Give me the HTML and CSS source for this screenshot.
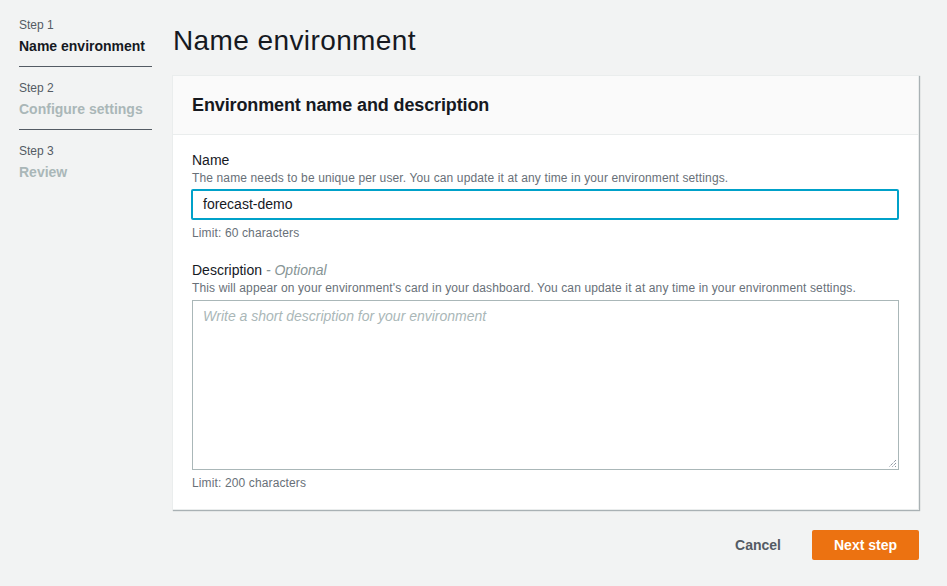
FILE: index.html
```html
<!DOCTYPE html>
<html>
<head>
<meta charset="utf-8">
<link rel="stylesheet" href="styles.css">
</head>
<body>
<div class="page">
  <nav class="steps">
    <div class="step">
      <div class="step-num">Step 1</div>
      <div class="step-name active">Name environment</div>
    </div>
    <div class="step">
      <div class="step-num">Step 2</div>
      <div class="step-name">Configure settings</div>
    </div>
    <div class="step last">
      <div class="step-num">Step 3</div>
      <div class="step-name">Review</div>
    </div>
  </nav>
  <main class="main">
    <h1 class="title">Name environment</h1>
    <section class="card">
      <header class="card-head">
        <h2>Environment name and description</h2>
      </header>
      <div class="card-body">
        <div class="field">
          <div class="label">Name</div>
          <div class="desc">The name needs to be unique per user. You can update it at any time in your environment settings.</div>
          <div class="input">forecast-demo</div>
          <div class="constraint">Limit: 60 characters</div>
        </div>
        <div class="field second">
          <div class="label">Description <span class="optional">- Optional</span></div>
          <div class="desc">This will appear on your environment's card in your dashboard. You can update it at any time in your environment settings.</div>
          <div class="textarea">
            <span class="placeholder">Write a short description for your environment</span>
            <svg class="grip" width="9" height="9" viewBox="0 0 9 9"><path d="M8 1 L1 8 M8 4 L4 8 M8 7 L7 8" stroke="#5f6b7a" stroke-width="1" stroke-dasharray="1 1" fill="none"/></svg>
          </div>
          <div class="constraint">Limit: 200 characters</div>
        </div>
      </div>
    </section>
    <div class="actions">
      <span class="cancel">Cancel</span>
      <span class="primary">Next step</span>
    </div>
  </main>
</div>
</body>
</html>
```

FILE: styles.css
```css
* { box-sizing: border-box; }
html, body { margin: 0; padding: 0; }
body {
  background: #f2f3f3;
  font-family: "Liberation Sans", Arial, sans-serif;
  color: #16191f;
  width: 947px;
  height: 586px;
  overflow: hidden;
}
.page {
  display: flex;
  align-items: flex-start;
}
.steps {
  width: 172px;
  padding: 4px 20px 0 19px;
}
.step {
  padding: 13px 0 10px;
  border-bottom: 1px solid #545b64;
}
.step.last { border-bottom: none; }
.step-num {
  font-size: 12px;
  line-height: 16px;
  color: #545b64;
}
.step-name {
  margin-top: 3px;
  font-size: 14px;
  line-height: 20px;
  color: #aab7b8;
  font-weight: 700;
}
.step-name.active { color: #16191f; }
.main {
  width: 747px;
  padding-top: 20px;
}
.title {
  margin: 0 0 13px 1px;
  font-size: 28px;
  line-height: 42px;
  font-weight: 400;
  letter-spacing: 0.4px;
  color: #16191f;
}
.card {
  background: #fff;
  border: 1px solid #eaeded;
  box-shadow: 1px 1px 1px 0 rgba(0, 28, 36, 0.3);
}
.card-head {
  background: #fafafa;
  border-bottom: 1px solid #eaeded;
  padding: 18px 19px;
}
.card-head h2 {
  margin: 0;
  font-size: 18px;
  line-height: 22px;
  font-weight: 700;
  letter-spacing: -0.12px;
}
.card-body {
  padding: 15px 19px 18px;
}
.field.second { margin-top: 19px; }
.label {
  font-size: 14px;
  line-height: 20px;
  color: #16191f;
}
.optional {
  font-style: italic;
  color: #879596;
}
.desc, .constraint {
  font-size: 12px;
  line-height: 16px;
  color: #687078;
  letter-spacing: 0.13px;
}
.constraint { margin-top: 5px; }
.input {
  margin-top: 3px;
  height: 31px;
  width: 708px;
  margin-left: -1px;
  border: 2px solid #00a1c9;
  border-radius: 2px;
  padding: 0 10px;
  font-size: 14px;
  line-height: 27px;
  color: #16191f;
}
.textarea {
  position: relative;
  margin-top: 4px;
  height: 170px;
  width: 707px;
  border: 1px solid #aab7b8;
  padding: 5px 10px;
  font-size: 14px;
  line-height: 20px;
}
.placeholder {
  font-style: italic;
  color: #aab7b8;
}
.grip {
  position: absolute;
  right: 1px;
  bottom: 1px;
}
.actions {
  display: flex;
  justify-content: flex-end;
  align-items: center;
  gap: 31px;
  margin-top: 20px;
}
.cancel {
  font-size: 14px;
  font-weight: 700;
  color: #545b64;
}
.primary {
  width: 107px;
  height: 30px;
  background: #ec7211;
  border-radius: 2px;
  color: #fff;
  font-size: 14px;
  font-weight: 700;
  display: flex;
  align-items: center;
  justify-content: center;
}
```
